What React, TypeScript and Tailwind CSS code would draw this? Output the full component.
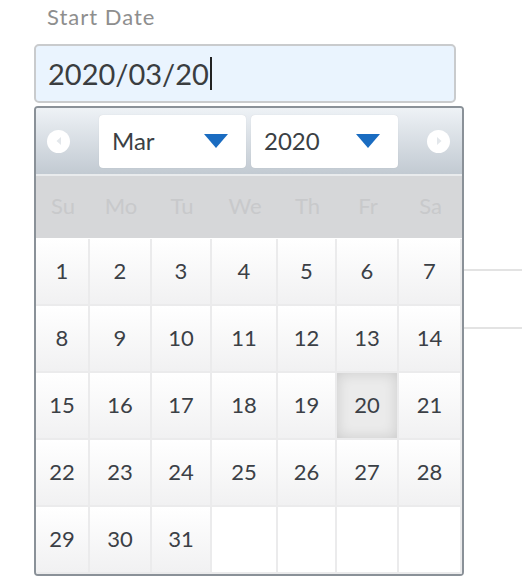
import React from "react";

const WEEKDAYS = ["Su", "Mo", "Tu", "We", "Th", "Fr", "Sa"];

// March 2020 starts on a Sunday, 31 days -> 5 rows of 7
const CELLS: (number | null)[] = Array.from({ length: 35 }, (_, i) => (i < 31 ? i + 1 : null));

// column widths read off the picture (they are not quite even)
const COLS = "grid grid-cols-[54px_62px_60px_66px_59px_62px_1fr]";

function NavButton({ dir }: { dir: "prev" | "next" }) {
  return (
    <button className="w-[23px] h-[23px] rounded-full bg-white flex items-center justify-center shrink-0">
      <svg width="8" height="10" viewBox="0 0 8 10">
        {dir === "prev" ? (
          <path d="M6 1 L1.5 5 L6 9 Z" fill="#e3e7eb" />
        ) : (
          <path d="M2 1 L6.5 5 L2 9 Z" fill="#e3e7eb" />
        )}
      </svg>
    </button>
  );
}

function SelectBox({ value }: { value: string }) {
  return (
    <div className="w-[147px] h-[53px] bg-white rounded-[4px] flex items-center justify-between pl-[13px] pr-[18px] shadow-[0_0_1px_rgba(0,0,0,0.15)]">
      <span className="text-[24px] text-[#3b3f44]">{value}</span>
      <svg width="24" height="14" viewBox="0 0 24 14">
        <path d="M0 0 H24 L12 14 Z" fill="#1a6cc1" />
      </svg>
    </div>
  );
}

export default function App() {
  return (
    <div className="relative w-[528px] h-[581px] bg-white font-['Lato',sans-serif] overflow-hidden">
      {/* lines of the form behind the popup */}
      <div className="absolute left-[464px] top-[269px] w-[58px] h-[2px] bg-[#e3e3e3]" />
      <div className="absolute left-[464px] top-[327px] w-[58px] h-[2px] bg-[#e3e3e3]" />

      <div className="pl-[34px]">
        <p className="pl-[13px] h-[44px] text-[22px] tracking-[1px] text-[#8e8e8e] leading-[34px]">Start Date</p>

        {/* input */}
        <div className="w-[422px] h-[59px] border-2 border-[#c9cbcd] rounded-[5px] bg-[#eaf4fe] flex items-center pl-[12px]">
          <span className="text-[29px] text-[#3a3d40]">2020/03/20</span>
          <span className="w-[2px] h-[33px] bg-[#222] ml-[1px]" />
        </div>

        {/* calendar popup */}
        <div className="relative mt-[3px] w-[430px] border-2 border-[#8a9198] rounded-[4px] overflow-hidden bg-white">
          <div className="h-[66px] bg-gradient-to-b from-[#eef2f6] to-[#c2cad2] flex items-center pl-[11px] pr-[12px]">
            <NavButton dir="prev" />
            <div className="flex-1 flex justify-center gap-[5px]">
              <SelectBox value="Mar" />
              <SelectBox value="2020" />
            </div>
            <NavButton dir="next" />
          </div>

          <div className="h-[2px] bg-[#e9ebed]" />
          <div className={COLS + " h-[62px] bg-[#d6d7d9]"}>
            {WEEKDAYS.map((d) => (
              <div key={d} className="flex items-center justify-center pb-[4px] text-[22px] text-[#c8c9cb]">
                {d}
              </div>
            ))}
          </div>

          <div className={COLS + " pt-[1px]"}>
            {CELLS.map((n, i) => (
              <div
                key={i}
                className={
                  "h-[67px] flex items-center justify-center pb-[2px] text-[22px] text-[#3b4046] border-r-2 border-b-2 border-[#ebebec] " +
                  (n === 20
                    ? "bg-[#ebebeb] shadow-[inset_0_0_14px_rgba(0,0,0,0.14)]"
                    : n === null
                    ? "bg-white"
                    : "bg-gradient-to-b from-white to-[#f1f1f2]")
                }
              >
                {n ?? ""}
              </div>
            ))}
          </div>
        </div>
      </div>
    </div>
  );
}
